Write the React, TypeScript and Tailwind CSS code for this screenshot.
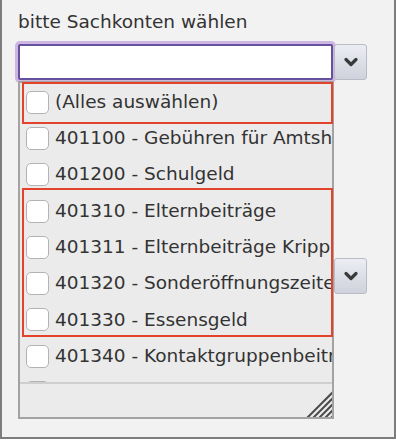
const items = [
  "(Alles auswählen)",
  "401100 - Gebühren für Amtshandlungen",
  "401200 - Schulgeld",
  "401310 - Elternbeiträge",
  "401311 - Elternbeiträge Krippe",
  "401320 - Sonderöffnungszeiten",
  "401330 - Essensgeld",
  "401340 - Kontaktgruppenbeiträge",
  "401400 - Eintrittsgelder Bad",
];

const Chevron = () => (
  <svg width="16" height="12" viewBox="0 0 16 12">
    <path
      d="M3 3.5 L8 8.5 L13 3.5"
      fill="none"
      stroke="#3a3a3a"
      strokeWidth="3.2"
      strokeLinecap="round"
      strokeLinejoin="round"
    />
  </svg>
);

const DropButton = ({ className }: { className?: string }) => (
  <button
    className={`w-[33px] h-[36px] flex items-center justify-center rounded-[3px] border border-[#b9bbc6] bg-gradient-to-b from-[#eceef3] to-[#cfd1dc] ${className ?? ""}`}
  >
    <Chevron />
  </button>
);

const Grip = () => (
  <svg width="30" height="30" viewBox="0 0 30 30" className="absolute right-0 bottom-0">
    <defs>
      <clipPath id="tri">
        <polygon points="30,0 30,30 0,30" />
      </clipPath>
    </defs>
    <g clipPath="url(#tri)" stroke="#4a4a4a" strokeWidth="2">
      <line x1="0" y1="36" x2="36" y2="0" />
      <line x1="6" y1="36" x2="42" y2="0" />
      <line x1="12" y1="36" x2="48" y2="0" />
      <line x1="18" y1="36" x2="54" y2="0" />
      <line x1="24" y1="36" x2="60" y2="0" />
    </g>
  </svg>
);

function App() {
  return (
    <div className="w-[396px] h-[440px] bg-white font-['DejaVu_Sans',sans-serif] text-[#333]">
      <div className="relative h-[439px] border-x-2 border-b-2 border-[#7d7d7d] bg-[#f2f2f2] pl-[16px] pt-[10px]">
        <div className="text-[18.5px] leading-[24px] whitespace-nowrap">bitte Sachkonten wählen</div>

        <div className="flex items-start mt-[10px]">
          <div className="w-[315px] h-[36px] bg-white border-2 border-[#6650a0] rounded-[2px] shadow-[0_0_0_3px_#cdb7e0]" />
          <DropButton className="ml-[1px]" />
        </div>

        <div className="flex mt-[178px]">
          <div className="w-[316px]" />
          <DropButton />
        </div>

        <div className="absolute left-[16px] top-[81px] w-[316px] h-[338px] border-2 border-[#a3a3a3] bg-[#ebebeb] flex flex-col">
          <div className="h-[301px] overflow-hidden pt-[1px] border-b-2 border-[#cfcfcf]">
            {items.map((item) => (
              <div key={item} className="h-[36.3px] flex items-center pl-[6px] gap-[6px] whitespace-nowrap">
                <span className="shrink-0 w-[23px] h-[23px] rounded-[5px] border border-[#b3b3b3] bg-white" />
                <span className="text-[18.5px] leading-none">{item}</span>
              </div>
            ))}
          </div>
          <div className="relative flex-1">
            <Grip />
          </div>

          <div className="absolute left-[2px] top-[-1px] w-[311px] h-[42px] border-[2.5px] border-[#e4432b]" />
          <div className="absolute left-[2px] top-[105px] w-[311px] h-[149px] border-[2.5px] border-[#e4432b]" />
        </div>
      </div>
    </div>
  );
}

export default App;
